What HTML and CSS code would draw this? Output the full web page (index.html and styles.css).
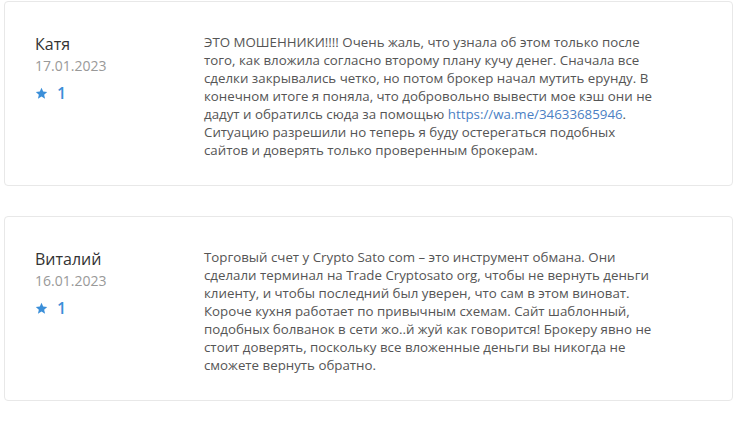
FILE: index.html
```html
<!DOCTYPE html>
<html lang="ru">
<head>
    <meta charset="UTF-8">
    <meta name="viewport" content="width=device-width, initial-scale=1.0">
    <title>Отзывы</title>
    <link rel="stylesheet" href="styles.css">
</head>
<body>
    <div class="reviews">
        <div class="review">
            <div class="review-author">
                <div class="author-name">Катя</div>
                <div class="review-date">17.01.2023</div>
                <div class="review-rating">
                    <svg class="star" viewBox="0 0 24 24" width="13" height="13"><path d="M12 1.5l3.1 6.9 7.4.7-5.6 5 1.7 7.4L12 17.6l-6.6 3.9 1.7-7.4-5.6-5 7.4-.7z"/></svg>
                    <span>1</span>
                </div>
            </div>
            <div class="review-text">
                ЭТО МОШЕННИКИ!!!! Очень жаль, что узнала об этом только после того, как вложила согласно второму плану кучу денег. Сначала все сделки закрывались четко, но потом брокер начал мутить ерунду. В конечном итоге я поняла, что добровольно вывести мое кэш они не дадут и обратилсь сюда за помощью <a href="#">https://wa.me/34633685946</a>. Ситуацию разрешили но теперь я буду остерегаться подобных сайтов и доверять только проверенным брокерам.
            </div>
        </div>

        <div class="review">
            <div class="review-author">
                <div class="author-name">Виталий</div>
                <div class="review-date">16.01.2023</div>
                <div class="review-rating">
                    <svg class="star" viewBox="0 0 24 24" width="13" height="13"><path d="M12 1.5l3.1 6.9 7.4.7-5.6 5 1.7 7.4L12 17.6l-6.6 3.9 1.7-7.4-5.6-5 7.4-.7z"/></svg>
                    <span>1</span>
                </div>
            </div>
            <div class="review-text">
                Торговый счет у Crypto Sato com – это инструмент обмана. Они сделали терминал на Trade Cryptosato org, чтобы не вернуть деньги клиенту, и чтобы последний был уверен, что сам в этом виноват. Короче кухня работает по привычным схемам. Сайт шаблонный, подобных болванок в сети жо..й жуй как говорится! Брокеру явно не стоит доверять, поскольку все вложенные деньги вы никогда не сможете вернуть обратно.
            </div>
        </div>
    </div>
</body>
</html>
```

FILE: styles.css
```css
body {
    font-family: 'Open Sans', sans-serif;
    margin: 0;
    padding: 0;
    background-color: #fff;
    color: #555;
}
.reviews {
    display: flex;
    flex-direction: column;
    gap: 30px;
    padding: 1px 0 0 4px;
}
.review {
    display: flex;
    width: 729px;
    box-sizing: border-box;
    height: 185px;
    padding: 30px 30px 0 30px;
    border: 1px solid #e8e8e8;
    border-radius: 4px;
    background-color: #fff;
}
.review-author {
    width: 169px;
    flex-shrink: 0;
}
.author-name {
    font-size: 16px;
    color: #333;
    line-height: 24px;
}
.review-date {
    font-size: 14px;
    color: #999;
    line-height: 20px;
}
.review-rating {
    display: flex;
    align-items: center;
    gap: 9px;
    margin-top: 6px;
    color: #3b8fd9;
    font-size: 16px;
    font-weight: 600;
}
.star {
    fill: #3b8fd9;
}
.review-text {
    font-size: 13.3px;
    line-height: 18px;
    padding-top: 1px;
    width: 456px;
}
.review-text a {
    color: #4b7fc4;
    text-decoration: none;
}
```
